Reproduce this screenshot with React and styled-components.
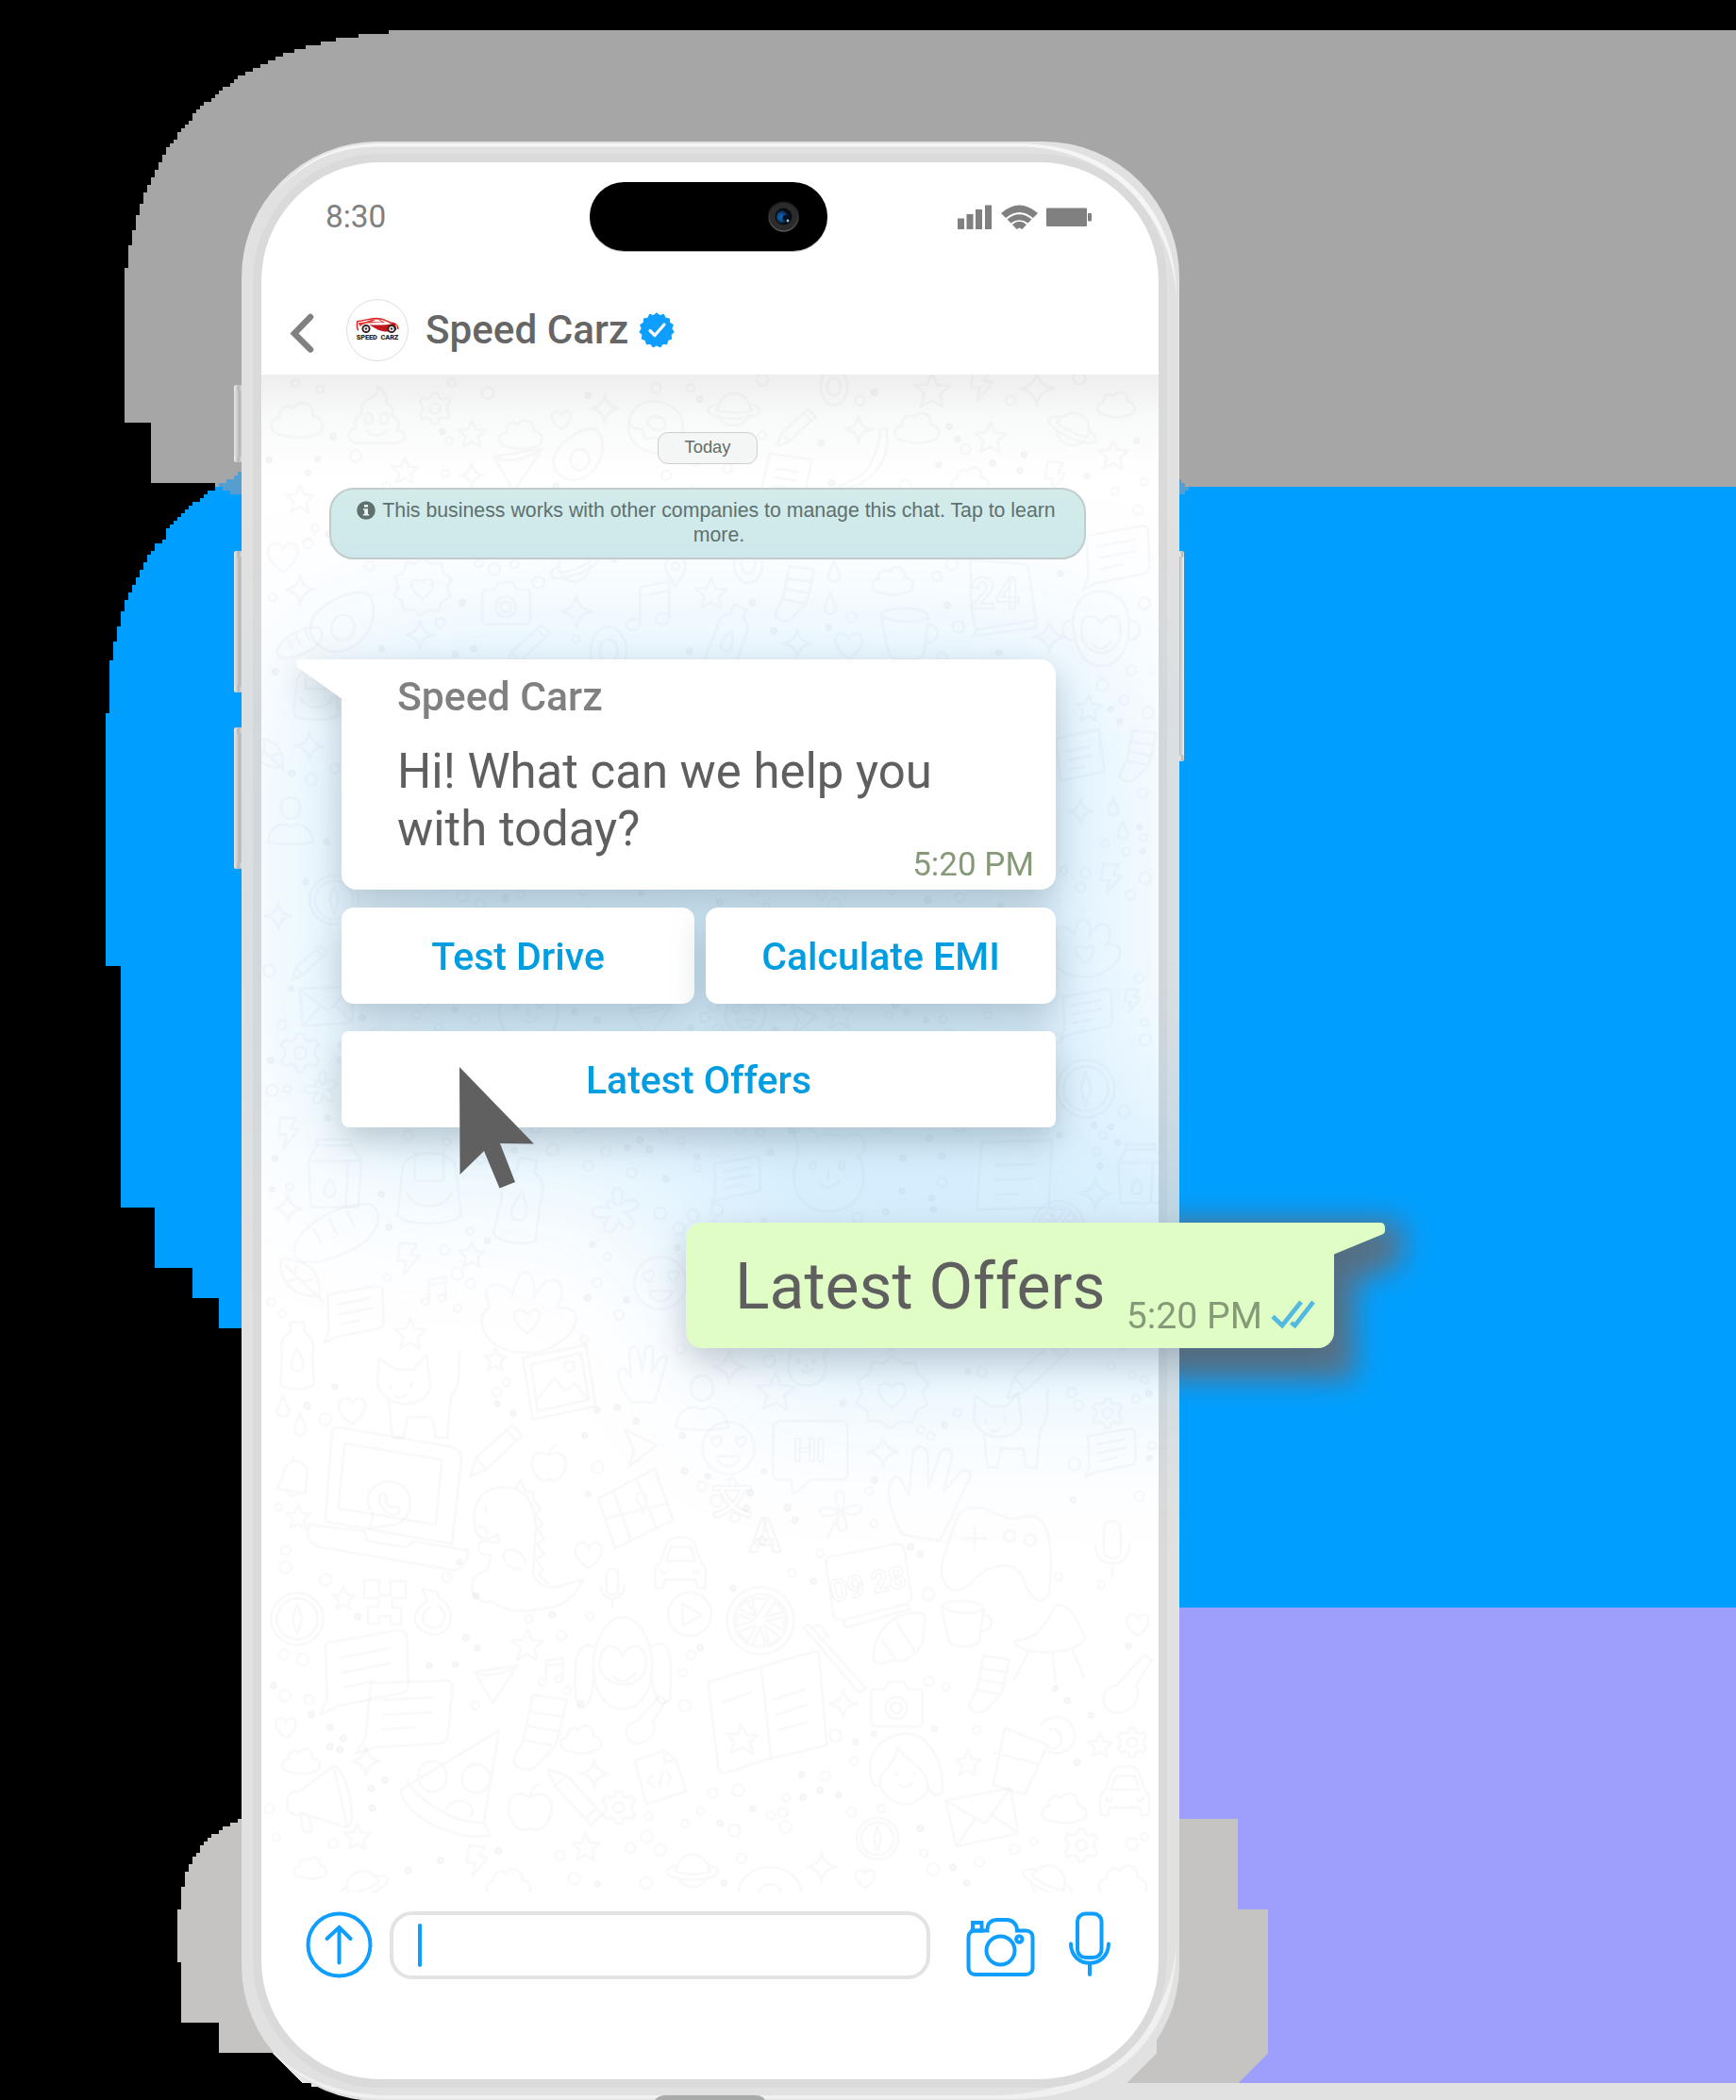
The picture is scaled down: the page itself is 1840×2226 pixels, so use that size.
import React from "react";
import styled, { createGlobalStyle } from "styled-components";

const GlobalStyle = createGlobalStyle`
  html, body { margin: 0; padding: 0; background: #000; }
  * { box-sizing: border-box; }
`;

const Page = styled.main`
  position: relative;
  width: 1840px;
  height: 2226px;
  overflow: hidden;
  background: #000;
  font-family: Roboto, "Liberation Sans", sans-serif;
  padding: 150px 0 0 256px;
`;

const Backdrop = styled.svg`
  position: absolute;
  inset: 0;
`;

const Phone = styled.section`
  position: relative;
  width: 994px;
  height: 2077px;
  padding: 22px 22px 23px 21px;
  border-radius: 144px;
  background: #e1e1e1;
`;

const Overlay = styled.svg`
  position: absolute;
  left: 0;
  top: 0;
  pointer-events: none;
`;

const Pointer = styled(Overlay)`
  left: 124px;
  top: 36px;
`;

/* Covers the whole handset, measured from the chat panel's corner */
const GlowLayer = styled.div`
  position: absolute;
  left: -21px;
  top: -247px;
  width: 994px;
  height: 2076px;
  pointer-events: none;
`;

const SideButton = styled.i`
  position: absolute;
  left: ${(p) => (p.$right ? "994px" : "-8px")};
  top: ${(p) => p.$top}px;
  width: ${(p) => (p.$right ? 5 : 8)}px;
  height: ${(p) => p.$height}px;
  border-radius: ${(p) => (p.$right ? "0 3px 3px 0" : "3px 0 0 3px")};
  background: ${(p) =>
    p.$right
      ? "linear-gradient(90deg, #b5b8ba, #d9dcde 60%, #eef1f3)"
      : "linear-gradient(90deg, #e6e7e7 0, #d2d3d4 35%, #b2b4b6 75%, #c8c9ca)"};
  &::before, &::after {
    content: "";
    position: absolute;
    left: 0;
    width: 100%;
    height: 7px;
    border-radius: 3px;
    background: linear-gradient(90deg, #f2f2f2, #b4b4b4 60%, #dcdcdc);
  }
  &::before { top: 0; }
  &::after { bottom: 0; }
`;

const Screen = styled.div`
  position: relative;
  display: flex;
  flex-direction: column;
  height: 2032px;
  border-radius: 126px;
  background: #fff;
  box-shadow: 0 0 0 9px #dadada;
`;

const StatusBar = styled.header`
  position: relative;
  display: grid;
  grid-template-columns: 1fr 252px 1fr;
  align-items: center;
  height: 116px;
  padding: 0 70px 0 68px;
`;

const Clock = styled.span`
  font-size: 33.4px;
  line-height: 38px;
  color: #808080;
`;

const Island = styled.div`
  display: flex;
  align-items: center;
  justify-content: flex-end;
  height: 73px;
  margin: 0 1px 2px -1px;
  padding-right: 30px;
  border-radius: 37px;
  background: #000;
  box-shadow: 0 1px 0 #a8a8a8;
`;

const StatusIcons = styled.div`
  display: flex;
  justify-content: flex-end;
`;

const ChatHeader = styled.div`
  position: relative;
  display: flex;
  align-items: center;
  height: 109px;
  padding: 14px 0 0 30px;
`;

const BackIcon = styled.svg`
  margin-top: 7px;
`;

const Avatar = styled.div`
  display: flex;
  flex-direction: column;
  align-items: center;
  width: 66px;
  height: 66px;
  margin-left: 34px;
  padding-top: 18px;
  border: 1px solid #dedede;
  border-radius: 50%;
`;

const LogoText = styled.span`
  font: 900 7.4px/8px Roboto, sans-serif;
  letter-spacing: -0.1px;
  word-spacing: 2px;
  color: #282828;
  white-space: nowrap;
`;

const ContactName = styled.h1`
  margin: 0 11px 0 18px;
  font-weight: 500;
  font-size: 42.2px;
  line-height: 50px;
  color: #666;
`;

const Chat = styled.div`
  position: relative;
  display: flex;
  flex-direction: column;
  height: 1609px;
  padding-top: 61px;
  background: linear-gradient(#eeeeee, rgba(248, 249, 249, 0.9) 46px, rgba(255, 255, 255, 0) 110px);
`;

const DateChip = styled.span`
  position: relative;
  align-self: center;
  width: 106px;
  height: 34px;
  margin-right: 5px;
  border: 1.5px solid #cdcfcf;
  border-radius: 11px;
  background: #f4f6f6;
  font: 18.4px/30px "Liberation Sans", Arial, sans-serif;
  text-align: center;
  color: #60706c;
`;

const Notice = styled.p`
  position: relative;
  align-self: center;
  width: 802px;
  height: 76px;
  margin: 25px 5px 0 0;
  padding: 9px 0 0 24px;
  border: 2px solid #c2cccc;
  border-radius: 26px;
  background: linear-gradient(#d2ecea, #cfe8eb);
  font: 21.3px/26px "Liberation Sans", Arial, sans-serif;
  text-align: center;
  white-space: pre;
  color: #5f706f;
  svg { margin: 0 7px 0 -27px; vertical-align: -3px; }
`;

const cardShadow = "drop-shadow(0 14px 18px rgba(60, 80, 88, 0.28))";

const Incoming = styled.article`
  position: relative;
  display: flex;
  flex-direction: column;
  width: 757px;
  height: 244px;
  margin: 106px 0 0 85px;
  padding: 14px 23px 0 59px;
  border-radius: 0 16px 16px 16px;
  background: #fff;
  filter: ${cardShadow};
`;

const Tail = styled.svg`
  position: absolute;
  top: 0;
  left: ${(p) => p.$left}px;
`;

const Sender = styled.h2`
  margin: 0;
  font-weight: 500;
  font-size: 42.7px;
  line-height: 50px;
  color: #808080;
`;

const Body = styled.p`
  margin: 25px 0 0;
  font-size: 50.9px;
  line-height: 60.5px;
  white-space: pre-line;
  color: #5f5f5f;
`;

const Time = styled.time`
  align-self: flex-end;
  margin-top: ${(p) => p.$lift || 0}px;
  font-size: ${(p) => p.$size}px;
  line-height: 40px;
  color: #879a78;
  white-space: nowrap;
`;

const Replies = styled.div`
  position: relative;
  display: grid;
  grid-template-columns: 374px 371px;
  column-gap: 12px;
  margin: ${(p) => p.$top}px 0 0 85px;
`;

const Reply = styled.button`
  grid-column: ${(p) => (p.$wide ? "1 / 3" : "auto")};
  height: 102px;
  padding: 0;
  border: 0;
  border-radius: ${(p) => (p.$wide ? 8 : 13)}px;
  background: #fff;
  font: 500 41px/104px Roboto, sans-serif;
  color: #009de0;
  filter: ${cardShadow};
`;

const Outgoing = styled.article`
  position: relative;
  align-self: flex-end;
  display: flex;
  align-items: flex-start;
  width: 687px;
  height: 133px;
  margin: 101px -186px 0 0;
  padding: 28px 20px 0 52px;
  border-radius: 17px 0 17px 17px;
  background: #e0fdc5;
  filter: drop-shadow(0 14px 18px rgba(60, 76, 90, 0.28));
`;

const OutgoingText = styled.p`
  margin: 0;
  font-size: 67.8px;
  line-height: 80px;
  color: #5f5f5f;
  white-space: nowrap;
`;

const Meta = styled.div`
  display: flex;
  align-items: flex-start;
  margin: 51px 0 0 auto;
  gap: 9px;
`;

const Ticks = styled.svg`
  margin-top: 2px;
`;

const InputBar = styled.footer`
  position: relative;
  display: flex;
  align-items: flex-start;
  padding: 20px 0 0 47px;
`;

const Field = styled.div`
  width: 573px;
  height: 72px;
  margin-left: 18px;
  padding: 9px 0 0 26px;
  border: 4px solid #e3e3e3;
  border-radius: 24px;
`;

const Caret = styled.div`
  width: 4px;
  height: 46px;
  border-radius: 2px;
  background: #0d9eff;
`;

const ActionIcon = styled.svg`
  margin-left: ${(p) => p.$gap}px;
  fill: none;
  stroke: #0d9eff;
  stroke-width: 4;
  stroke-linecap: round;
`;

/* Line drawings of the chat wallpaper, each in a -50..50 box */
const DOODLES = {
  cloud: "M-28 24C-52 24-54-6-32-8C-34-26-16-34-6-24C4-44 34-32 28-10C50-10 54 20 32 24C12 32-10 30-28 24Z",
  star: "M0-46L13-15L46-12L21 10L28 44L0 26L-30 42L-20 9L-46-14L-13-16Z",
  sparkle: "M0-50Q6-6 50 0Q6 6 0 50Q-6 6-50 0Q-6-6 0-50Z",
  heart: "M0 42C-60 4-46-38-20-38C-6-38 0-24 0-20C4-30 16-42 30-36C58-20 32 22 0 42Z",
  planet: "M-30 6A30 32 0 1 1 30 6M-28 14A30 30 0 0 0 28 14M-32-6C-64 4-44 20 0 20S62 4 32-6M-32 2C-34 12 34 12 32 2",
  gear: "M-8-48H8L12-34L24-28L38-34L48-20L38-8V8L48 20L38 34L24 28L12 34L8 48H-8L-12 34L-24 28L-38 34L-48 20L-38 8V-8L-48-20L-38-34L-24-28L-12-34ZM16 0A16 16 0 1 1-16 0A16 16 0 1 1 16 0",
  bolt: "M-22-46L26-42L8-12L34-8L-12 48L-4 8L-30 6Z",
  rings: "M34 0A34 46 0 1 1-34 0A34 46 0 1 1 34 0M17 0A17 22 0 1 1-17 0A17 22 0 1 1 17 0",
  donut: "M48 0C48 36 26 46 0 46S-48 30-48 0S-24-44 0-44S48-30 48 0ZM-46 6C-34 22-26 2-16 20C-6 34 2 10 12 22C22 34 34 6 46 12M16-6A16 12 0 1 1-16-6A16 12 0 1 1 16-6",
  poo: "M-10-28C0-34 4-40 2-50C16-40 20-30 16-20C30-18 30-4 24 0C42 6 40 20 34 24C56 32 48 48 30 48H-34C-54 44-50 24-34 22C-40 10-34 0-24-2C-30-14-22-24-10-28ZM-6 6A7 9 0 1 1-20 6A7 9 0 1 1-6 6M20 6A7 9 0 1 1 6 6A7 9 0 1 1 20 6M-16 28Q0 42 16 28",
  banana: "M34-50C44 0 10 46-46 48C-40 36-6 36 8 8C18-12 24-30 24-48Z",
  cone: "M-46-20L46-34L-8 46ZM-46-20C-30-6 20-14 46-34",
  card: "M-40-30L36-46L46 28L-32 44ZM-20-8L20-16M-18 8L22 0M-14 24L10 19",
  doc: "M-42-30L38-44C44-44 46-40 46-36L48 14C48 20 46 22 42 24L-28 38L-48 48L-40 30ZM-26-14L26-24M-24 2L28-8M-22 18L10 11",
  camera: "M-46-20C-46-26-42-28-38-28H-22L-14-42H14L22-28H40C46-28 48-24 48-20V30C48 36 44 40 38 40H-38C-44 40-46 36-46 30ZM20 6A20 20 0 1 1-20 6A20 20 0 1 1 20 6M10 6A10 10 0 1 1-10 6A10 10 0 1 1 10 6",
  drop: "M0-46C-4-20-24 0-24 20C-22 48 22 48 24 20C24 0 4-20 0-46Z",
  pin: "M0 48C-10 20-32 4-30-18C-26-54 26-54 30-18C32 4 10 20 0 48ZM11-16A11 11 0 1 1-11-16A11 11 0 1 1 11-16",
  music: "M-18 30V-36L34-46V20M-18-20L34-30M-18 30A12 10 0 1 1-42 30A12 10 0 1 1-18 30M34 20A12 10 0 1 1 10 20A12 10 0 1 1 34 20",
  sock: "M-4-48L40-42L28 10C24 24 12 30 0 44C-10 54-34 46-28 32L-16 10ZM-8-26L36-20M-12-8L32 0M-16 10L26 18",
  cup: "M-44-30C-30-44 24-44 34-26L26 34C20 46-22 48-30 34ZM-44-30C-30-16 22-14 34-26M34-14C56-12 52 16 28 16",
  calendar: "M-38-46L32-40C38-40 42 20 46 30L-30 42C-42 10-34-30-38-46ZM-30 42L-34 50L44 40L46 30",
  person: "M20-26A20 22 0 1 1-20-26A20 22 0 1 1 20-26M-46 44C-44 10-18 2 0 12C14 2 44 10 46 44Q0 52-46 44Z",
  monkey: "M34-6C36-34 18-48-2-48S-38-30-34 0S-16 46 4 44S36 16 34-6ZM-34-12C-56-12-48 16-32 12M34-12C54-14 50 14 34 12M-24-4C-22-24-6-18 0-8C4-18 22-24 24-4C26 14 14 28 0 28S-26 14-24-4M-12 16Q0 30 12 14",
  clock: "M46 0A46 46 0 1 1-46 0A46 46 0 1 1 46 0M36 0A36 36 0 1 1-36 0A36 36 0 1 1 36 0M-8 0L0-28L8 0L0 28Z",
  envelope: "M-46-30L46-34L48 30L-40 36ZM-46-30L4 10L46-34M-40 36L-10 2M48 30L16 0",
  flower: "M0-10C-22-50 26-50 6-10C36-36 54 0 12 2C50 20 16 48 4 12C0 52-40 34-8 8C-50 22-52-20-10-4C-22-14-14-28 0-10Z",
  carton: "M-36-20L-24-42H24L38-22L34 44H-32ZM-36-20H20L38-22M20-20L16 44M-24-42V-50H22L24-42M-6 6C-20 22-12 30-6 30S8 20-6 6",
  bread: "M-48 26C-52 0 0-34 38-30C58-20 42 14 10 24C-10 34-40 42-48 26ZM-26-2L-18 12M-8-14L0 4M12-22L20-4",
  leaf: "M-44-44C10-46 42-20 36 34C-10 36-50 10-44-44ZM-34-30L46 46M-14-12L-12-30M2 4L24-2M-6-4L-28 2",
  bag: "M-34-20C-34-50 34-50 34-20L40 36C30 50-30 50-40 36ZM-18-44V-8H18V-44M-28 8C-20 30 20 30 28 8",
  bottle: "M-10-48H10V-34C24-26 24-14 22 0L24 42C10 50-14 50-24 42L-22 0C-24-14-24-26-10-34ZM0-10C-14 14-8 22 0 22S14 14 0-10",
  bear: "M-34-30C-46-50-14-52-12-36C-2-42 12-40 18-34C32-50 50-28 34-16C48 20 30 46 0 46S-46 20-34-14ZM-16-8A3 4 0 1 1-18-8M16-8A3 4 0 1 1 14-8M-10 14Q0 26 12 12M0 2V12",
  hands: "M-6 44C-40 44-54 10-36 0C-48-20-28-30-14-12C-10-40 10-40 6-8C20-40 44-24 28 2C54-4 52 24 28 36C18 44 6 46-6 44ZM0 26C-24 8-8-4 0 8C8-4 22 8 0 26",
  picture: "M-42-30L34-46L46 28L-30 44ZM-32-22L28-36L38 20L-24 34ZM-26 22L-4-6L10 10L20 0L36 18M20-20A6 6 0 1 1 8-20A6 6 0 1 1 20-20",
  hand: "M-20 46C-40 20-46 0-38-10C-30-14-26 0-20 6L-24-38C-20-50-10-46-8-36L-2-6L4-44C10-52 18-46 16-36L14-4L28-28C38-34 40-24 36-16C28 10 26 26 18 46Z",
  cat: "M-40-40L-22-28H-4L10-44L14-12C12 4 0 8-14 8S-42-4-42-16ZM-30 4L-26 44H-14L-10 22H16L20 44H32L36 0C52-20 40-40 46-48M-28-12V-8M-6-14V-10M-22 0Q-16 4-12-2",
  laptop: "M-30-46L40-34C44-32 46-30 46-26L40 26L-38 12L-34-40C-34-44-34-46-30-46ZM-26-36L34-26L30 14L-30 4ZM-48 14L-14 18L-12 24L12 28L16 24L50 30C50 38 46 42 40 42L-40 28C-48 26-50 22-48 14Z",
  phone: "M0-46C60-44 56 46 0 44L-40 50L-32 22C-58-14-30-46 0-46ZM-18-20C-26 6 2 30 22 20V8L10 6L2 8L-6-4L-4-12L-10-22Z",
  bell: "M-40 26L-24-8C-24-34 4-46 20-30C38-20 24 4 26 38ZM-4-38V-48M-14 32C-14 46 4 46 8 36",
  pencil: "M-46 46L-36 14L28-44L46-26L-18 34ZM-36 14L-18 34M18-34L36-16",
  apple: "M0-20C-34-40-50-10-40 16C-30 50-8 46 0 40C10 50 34 40 40 14C48-14 30-38 0-20ZM0-20C0-34 8-44 18-46",
  triangle: "M-34-46L46-8L-24 46L-12 4Z",
  smile: "M46 0A46 46 0 1 1-46 0A46 46 0 1 1 46 0M-24-18C-10-30-8-10-20-2C-34-10-32-22-24-18M20-18C34-28 34-10 22-2C10-10 12-24 20-18M-20 14H20C18 38-18 38-20 14Z",
  bubble: "M-36-46H40C46-46 48-42 48-38V20C48 26 46 28 40 28H2L-20 46L-24 28H-38C-44 28-46 26-46 20V-38C-46-42-42-46-36-46Z",
  gamepad: "M-34-30C-10-46 0-20 20-26C46-34 50-6 46 40C40 54 28 46 22 26C14 10-8 16-20 28C-36 48-54 36-48 10ZM-30-8H-10M-20-18V2M16-10A5 5 0 1 1 6-10A5 5 0 1 1 16-10M34-6A5 5 0 1 1 24-6A5 5 0 1 1 34-6",
  mic: "M-14-32C-14-50 14-50 14-32V4C14 22-14 22-14 4ZM-28-4C-28 36 28 36 28-4M0 26V48",
  dino: "M-42-10C-48-34-36-46-20-46C-2-46 4-34 6-16L4 24C8 34 16 36 24 34L44 28C38 42 28 52 8 52C-8 56-22 52-28 46C-40 48-48 40-44 28C-42 22-34 24-32 18L-30 8C-38 10-44 2-38-2C-32-4-28 0-24-2V-8C-30-4-38-2-42-10ZM-34-30V-26M-40-14C-34-16-32-10-34-4M-6 20C-20 20-24 6-16 4C-8 4-4 8-2 14M-10-46L-6-52L-2-42L4-42V-36L10-28L6-24L12-16L7-12L13-4L7 0L13 8L6 12L12 20L8 24L16 32",
  map: "M-44-12L24-48L46 14L-24 48ZM-26-20L-4 40M2-36L26 24M8-2C-10-20 18-26 14-8L10 6ZM-36 12L40-6",
  clover: "M0 0C-30-50 26-50 0 0C50-34 50 24 0 0C34 48-24 48 0 0C-46 30-54-26 0 0L-24 48",
  car: "M-34 0L-22-34C-14-46 18-46 24-34L36 0C46 8 44 20 42 44H30L26 30H-26L-30 44H-42C-44 20-46 6-34 0ZM-24-2L-16-26H18L26-2ZM-22 14A5 5 0 1 1-32 14M32 14A5 5 0 1 1 22 14",
  digital: "M-46-20C-48-26-46-28-42-30L30-44C36-44 40-42 40-38L48 14C48 18 46 20 42 22L-28 40C-34 40-36 38-38 34ZM-28 40L-24 48L46 28L42 22",
  orange: "M48 0A48 48 0 1 1-48 0A48 48 0 1 1 48 0M38 0A38 38 0 1 1-38 0A38 38 0 1 1 38 0M-6-6L-12-32H12ZM6-6L22-28L32-12ZM8 0L34-6V14ZM6 6L28 24L12 34ZM0 8L8 36H-12ZM-6 6L-18 30L-32 16ZM-8 0L-34 8V-10ZM-6-5L-32-18L-20-30Z",
  play: "M46 0A46 46 0 1 1-46 0A46 46 0 1 1 46 0M-16-22L26 2L-14 24Z",
  creeper: "M-44-46H-12V-14H12V-44H44V-8H16V12H34V48H12V30H-12V46H-36V10H-14V-8H-44Z",
  ring: "M-12-20L-22-46L8-40L12-26C46-14 44 42 6 48C-44 46-50 0-12-20ZM-6-8C-34 10-20 34 4 34C28 30 30-4 10-10",
  croissant: "M-44 34C-46-20 0-50 34-44C50-36 36-26 40-10C38 20 10 40-10 34C-24 34-30 48-44 34ZM-30 0L-8 32M-6-28L26 22",
  toothbrush: "M-44-46L-36-50L46 42L36 48ZM-32-44L-22-50L-8-34L-20-28",
  grill: "M-44 0C-20-4-10-8 8-46C30-50 36-20 46-6C40 18-36 20-44 0ZM-26 12L-44 48M4 14L8 50M28 8L44 44",
  girl: "M30 4C30 34 14 48 0 48S-30 34-30 4S-14-46 0-46S30-26 30 4ZM-30-16C-52-26-50 20-46 46C-32 50-32 30-30 20M30-16C52-30 50 10 48 38C36 50 32 30 30 20M-24 0C-20-24-4-18 0-6C6-22 24-20 24 2C22 30-22 30-24 0M-10 14Q0 26 12 12",
  book: "M-46-24L-4-36L38-48C42-48 42-46 42-44L48 26L-2 38L-32 48C-36 48-38 46-38 42ZM-4-36L4 36M-34-8L-12-16M6-10L30-18M8 2L32-6M10 14L32 8M-20 10L-15 18L-6 18L-13 24L-10 33L-19 28L-28 32L-25 23L-32 17L-22 17Z",
  guitar: "M30-48L42-40L16 2C30 22 4 50-20 44C-44 34-40 6-14 0Z",
  pizza: "M44-48L-46 6C-44 30 4 54 36 48L30 36L44-48ZM-40-2C-26 20 8 38 30 36M-4-6A13 14 0 1 1-30-6A13 14 0 1 1-4-6M36-4A13 13 0 1 1 10-4A13 13 0 1 1 36-4M-4 24C4 8 26 20 18 30",
  megaphone: "M-44 12C-46-10-34-12-28-10L20-46L40 40L-24 20C-32 26-42 20-44 12ZM20-46C40-44 54 34 40 40M-26 20L-22 46L-10 46L-14 24",
  file: "M-44-28L6-46L26-30L44 24L-24 46ZM6-46L8-26L26-30M-14-4L-22 8L-10 16M10-10L18 0L12 12M4-10L-2 16",
  boy: "M-46 10C-54-30-20-50 4-48S52-14 48 30C40 38 34 30 30 24C20 50-20 56-34 20C-40 24-44 20-46 10ZM-34 20C-36 0-18 2-10-30C0-8 26-10 30 24M-12 4V8M12 4V8M-8 20Q0 26 8 18",
  drink: "M-24-32L28-12L0 48L-38 36ZM-36-2L14 10M-24-32L28-12M20-36A22 22 0 1 1 28-4M30-30A10 12 0 1 1 26-12",
  avocado: "M20-48C46-30 44 20 10 40C-20 56-50 30-40 4C-32-20-2-50 20-48ZM18 8A16 18 0 1 1-14 8A16 18 0 1 1 18 8",
  badge: "M0-48L14-38L30-40L34-24L48-12L40 0L46 16L32 24L26 40L10 38L-4 48L-16 38L-32 38L-34 24L-48 14L-40 0L-46-16L-32-24L-26-40L-12-38ZM0 20C-30 0-18-20 0-8C14-22 30 0 0 20Z",
};

/* name, x, y, size, rotation */
const PLACED = [
  ["cloud", 315, 447, 58], ["poo", 399, 440, 62], ["gear", 461, 433, 34], ["star", 500, 460, 32], ["heart", 595, 445, 24], ["cloud", 552, 462, 48],
  ["planet", 778, 432, 58], ["donut", 695, 452, 60, 15], ["rings", 884, 410, 42], ["star", 988, 414, 40], ["bolt", 1040, 408, 36], ["sparkle", 1099, 412, 36],
  ["cloud", 1183, 430, 42], ["cloud", 972, 455, 50], ["planet", 1138, 453, 58, 25], ["sparkle", 910, 455, 28], ["star", 1050, 464, 36], ["star", 1180, 482, 34],
  ["avocado", 614, 482, 62, 10], ["banana", 917, 487, 66], ["card", 832, 505, 58, 20], ["cone", 549, 495, 56], ["star", 429, 499, 30], ["star", 318, 529, 32],
  ["sparkle", 500, 504, 26], ["sparkle", 318, 625, 32], ["pencil", 844, 453, 44], ["sparkle", 641, 433, 30], ["bolt", 1118, 505, 34], ["cloud", 1028, 510, 42],
  ["doc", 1183, 590, 74], ["calendar", 1060, 632, 84], ["monkey", 1167, 668, 86], ["badge", 448, 622, 64], ["camera", 536, 640, 54], ["planet", 608, 598, 56, -20],
  ["pin", 716, 606, 36], ["music", 689, 644, 60], ["star", 754, 629, 36], ["sock", 839, 629, 60], ["drop", 884, 606, 26], ["drop", 880, 640, 26], ["cloud", 946, 617, 46],
  ["cup", 962, 671, 66], ["avocado", 364, 659, 76, 20], ["bread", 318, 680, 50], ["sparkle", 611, 648, 34], ["sparkle", 445, 673, 30], ["sparkle", 845, 682, 30], ["sparkle", 1112, 675, 34],
  ["bottle", 773, 675, 70, 20], ["heart", 900, 684, 34], ["rings", 645, 690, 56], ["pencil", 560, 684, 50], ["rings", 793, 598, 44], ["heart", 300, 590, 38],
  ["person", 308, 870, 52], ["sparkle", 328, 791, 30], ["clock", 354, 954, 56], ["sparkle", 295, 971, 28], ["bag", 335, 735, 60], ["leaf", 285, 800, 40],
  ["star", 1154, 751, 30], ["sock", 1203, 801, 56], ["card", 1143, 801, 60], ["bolt", 1177, 931, 34], ["drop", 1180, 855, 22], ["drop", 1190, 880, 22], ["sparkle", 1145, 860, 26],
  ["envelope", 345, 1066, 60], ["pencil", 328, 1020, 40], ["gear", 318, 1116, 42], ["flower", 341, 1154, 44], ["bolt", 305, 1200, 34], ["carton", 354, 1246, 76],
  ["sparkle", 305, 1281, 30], ["bread", 357, 1305, 94], ["doc", 1151, 1074, 58], ["clock", 1151, 1154, 66], ["bolt", 1200, 1060, 26], ["hands", 1150, 1000, 80],
  ["bear", 560, 1068, 80], ["cone", 690, 1080, 50], ["smile", 790, 1075, 46], ["star", 890, 1075, 34], ["triangle", 850, 1080, 34],
  ["leaf", 320, 1357, 50], ["bolt", 432, 1334, 36], ["star", 500, 1330, 30], ["bag", 455, 1258, 84], ["bottle", 552, 1273, 94, 10], ["flower", 653, 1284, 62],
  ["doc", 780, 1250, 54], ["bear", 878, 1240, 96], ["card", 1073, 1246, 96, 10], ["sparkle", 1161, 1265, 34], ["carton", 1209, 1246, 66], ["orange", 1122, 1300, 56],
  ["doc", 375, 1392, 66], ["hands", 559, 1385, 110], ["star", 435, 1414, 36], ["music", 461, 1369, 34], ["bottle", 315, 1437, 74], ["cat", 442, 1480, 100],
  ["star", 525, 1441, 26], ["picture", 591, 1466, 88], ["hand", 682, 1457, 64], ["star", 822, 1475, 44], ["person", 744, 1487, 60], ["badge", 946, 1476, 80],
  ["cat", 1070, 1516, 90], ["heart", 373, 1495, 34], ["drop", 300, 1491, 26], ["drop", 318, 1510, 26], ["gear", 1174, 1498, 32], ["sparkle", 773, 1449, 34],
  ["bear", 855, 1445, 52], ["pencil", 1100, 1450, 70], ["smile", 700, 1360, 60],
  ["laptop", 410, 1592, 172], ["phone", 412, 1594, 52], ["bell", 312, 1566, 46], ["star", 316, 1608, 28], ["pencil", 526, 1537, 60], ["apple", 582, 1551, 42],
  ["triangle", 677, 1535, 42], ["smile", 772, 1535, 60], ["bubble", 858, 1545, 84], ["sparkle", 936, 1539, 32], ["hand", 985, 1583, 104, 10], ["doc", 1177, 1539, 56],
  ["gamepad", 1057, 1640, 120], ["mic", 1179, 1641, 64], ["dino", 560, 1637, 132], ["heart", 624, 1648, 34], ["map", 673, 1599, 88], ["clover", 891, 1602, 58],
  ["car", 721, 1656, 62], ["digital", 920, 1679, 96], ["mic", 649, 1683, 44], ["clock", 315, 1716, 60], ["star", 364, 1694, 26], ["creeper", 408, 1698, 50],
  ["ring", 459, 1708, 52], ["play", 731, 1711, 50], ["orange", 806, 1718, 74], ["toothbrush", 884, 1759, 74], ["croissant", 954, 1738, 64], ["cup", 1023, 1720, 58],
  ["grill", 1112, 1740, 84], ["heart", 1206, 1722, 28], ["doc", 386, 1771, 98], ["doc", 430, 1819, 98, 8], ["star", 559, 1744, 36], ["girl", 660, 1762, 104],
  ["book", 812, 1815, 134], ["camera", 950, 1807, 58], ["sock", 1045, 1785, 62], ["guitar", 1193, 1786, 66], ["cone", 526, 1782, 50], ["music", 585, 1773, 34],
  ["sock", 568, 1836, 82], ["cloud", 616, 1845, 46], ["cloud", 319, 1868, 42], ["sparkle", 388, 1867, 30], ["pizza", 478, 1890, 116], ["megaphone", 338, 1907, 76],
  ["file", 700, 1884, 62], ["boy", 960, 1876, 80], ["drink", 1086, 1860, 88], ["star", 1026, 1869, 30], ["star", 1166, 1850, 28], ["car", 1192, 1898, 60],
  ["envelope", 1040, 1926, 76, -8], ["clock", 930, 1949, 48], ["gear", 656, 1916, 36], ["pencil", 610, 1905, 64, 90], ["cloud", 1128, 1918, 50], ["gear", 1200, 1847, 32],
  ["gear", 1146, 1956, 36], ["star", 379, 1947, 30], ["star", 621, 1958, 32], ["bolt", 505, 1972, 34], ["planet", 734, 1981, 58], ["sparkle", 871, 1979, 32],
  ["planet", 1112, 1993, 60, 25], ["cloud", 1190, 1996, 54], ["cloud", 539, 1998, 50], ["planet", 384, 1998, 58, -20], ["cloud", 329, 1981, 36], ["donut", 816, 2010, 70],
  ["sparkle", 630, 1880, 30], ["sparkle", 894, 1806, 30], ["heart", 303, 1831, 26], ["heart", 917, 1991, 24], ["apple", 562, 1916, 54], ["guitar", 683, 1824, 54],
];

const scatter = () => {
  let seed = 41;
  const next = () => (seed = (seed * 16807) % 2147483647) / 2147483647;
  const marks = PLACED.map(([, x, y, s]) => ({ x, y, r: s * 0.5 }));
  const dots = [];
  for (let i = 0; i < 9000 && dots.length < 780; i++) {
    const dot = { x: 285 + next() * 936, y: 400 + next() * 1600, r: [2.8, 3.2, 4, 5, 6.2][Math.floor(next() * 5)] };
    if (marks.every((m) => Math.hypot(m.x - dot.x, m.y - dot.y) > m.r + dot.r + 4)) {
      dots.push(dot);
      marks.push(dot);
    }
  }
  return dots;
};
const DOTS = scatter();

const Wallpaper = () => (
  <Overlay width="951" height="1609" viewBox="277 397 951 1609" fill="none" stroke="rgba(40,50,60,0.028)">
    {PLACED.map(([name, x, y, size, turn = 0], i) => (
      <path key={i} d={DOODLES[name]} transform={`translate(${x} ${y}) rotate(${turn}) scale(${size / 100})`} strokeWidth={280 / size} strokeLinejoin="round" strokeLinecap="round" />
    ))}
    {DOTS.map((d, i) => (
      <circle key={i} cx={d.x} cy={d.y} r={d.r} strokeWidth="2.5" fill={d.r < 3.5 ? "rgba(40,50,60,0.028)" : "none"} />
    ))}
    <g fontFamily="Roboto, sans-serif" fontWeight="700" strokeWidth="2.4" stroke="rgba(40,50,60,0.04)" textAnchor="middle">
      <text x="1055" y="645" fontSize="46">24</text>
      <text x="858" y="1549" fontSize="34">HI</text>
      <text x="920" y="1690" fontSize="32" transform="rotate(-12 920 1680)">09 28</text>
      <text x="776" y="1605" fontSize="44" fontFamily="'Noto Sans CJK SC', sans-serif">文</text>
      <text x="811" y="1645" fontSize="50">A</text>
    </g>
  </Overlay>
);

const steps = (pairs) => pairs.map(([x, y], i) => (i ? `H${x}V${y}` : `M${x} ${y}`)).join("");

const GRAY = steps([
  [132, 512], [132, 284], [136, 260], [140, 244], [144, 228], [148, 216], [152, 204], [156, 196], [160, 188], [164, 180], [168, 172], [172, 164], [176, 156], [180, 152],
  [184, 148], [188, 140], [192, 136], [196, 132], [200, 128], [204, 120], [208, 116], [212, 112], [216, 108], [224, 104], [228, 100], [232, 96], [236, 92], [244, 88],
  [248, 84], [252, 80], [260, 76], [268, 72], [276, 68], [284, 64], [292, 60], [300, 56], [312, 52], [324, 48], [340, 44], [356, 40], [380, 36], [412, 32],
]);
const BLUE = steps([
  [112, 1024], [112, 756], [116, 700], [120, 680], [124, 664], [128, 648], [132, 636], [136, 628], [140, 620], [144, 612], [148, 604], [152, 596], [156, 588], [160, 584],
  [164, 576], [172, 572], [176, 560], [180, 556], [184, 552], [188, 548], [192, 544], [196, 540], [200, 536], [204, 532], [212, 528], [216, 524], [220, 520], [228, 516],
]);
const FOOT = steps([
  [188, 2080], [188, 2024], [192, 2000], [196, 1984], [200, 1976], [204, 1968], [208, 1964], [212, 1956], [216, 1952], [220, 1948], [224, 1944], [232, 1940], [236, 1936],
  [244, 1932], [252, 1928],
]);

const BackdropShapes = () => (
  <Backdrop width="1840" height="2226" viewBox="0 0 1840 2226" shapeRendering="crispEdges">
    <path fill="#a6a6a6" d={`${GRAY}H1840V516H228V512H160V448H132Z`} />
    <path fill="#009fff" d={`${BLUE}H1840V1704H700V1408H232V1376H204V1344H164V1280H128V1024Z`} />
    <path fill="#559fd0" d="M232 516V512H240V508H248V504H252V500H260V524H244V520H236V516ZM1248 508H1252V512H1256V516H1260V520H1256V524H1248Z" />
    <path fill="#9e9efc" d="M1100 1704H1840V2208H1100Z" />
    <path fill="#c6c4c2" d={`${FOOT}H420V2176H232V2144H192V2080ZM1100 1928H1312V2024H1344V2176L1312 2208H1100Z`} />
    <path fill="#e8e8e8" d="M288 2176H400V2212H330V2208H320Z" />
    <path fill="#e1e1e1" d="M1000 2208H1194L1226 2176V2150H1000ZM900 2208H1840V2226H900Z" />
    <defs>
      <filter id="cast" filterUnits="userSpaceOnUse" x="900" y="1200" width="700" height="340">
        <feGaussianBlur stdDeviation="15" />
      </filter>
    </defs>
    <path filter="url(#cast)" fill="#6e6a70" fillOpacity="0.8" shapeRendering="auto" d="M1000 1294H1486V1340L1436 1360V1462H1000Z" />
  </Backdrop>
);

const Glow = () => (
  <Overlay width="994" height="2076" viewBox="256 150 994 2076">
    <defs>
      <filter id="soft" filterUnits="userSpaceOnUse" x="-100" y="300" width="2100" height="1700">
        <feGaussianBlur stdDeviation="86" />
      </filter>
      <clipPath id="body"><rect x="256" y="150" width="994" height="2076" rx="144" /></clipPath>
    </defs>
    <g clipPath="url(#body)">
      <path filter="url(#soft)" fill="#0096f0" fillOpacity="0.165" d="M330 690H1180V1190H1460V1460H800L690 1230H340Z" />
    </g>
  </Overlay>
);

const Highlights = () => (
  <Overlay width="994" height="2076" viewBox="256 150 994 2076">
    <clipPath id="shell"><rect x="256" y="150" width="994" height="2077" rx="144" /></clipPath>
    <g clipPath="url(#shell)">
      <path fill="#f5f5f5" d="M294 201C322 171 352 153 400 152H1080C1170 152 1246 210 1247 314C1240 220 1170 155.500 1080 155.500H400C354 156 324 172 294 201Z" />
      <path fill="#f0f0f0" d="M290 2176C320 2204 360 2220 410 2221H1050C1170 2221 1240 2150 1246.500 2063C1247 2160 1180 2225 1070 2225H410C360 2225 316 2206 290 2176Z" />
      <path fill="#a9aaaa" d="M694 2226Q698 2221 706 2221H800Q808 2221 811 2226Z" />
    </g>
  </Overlay>
);

const burst = Array.from({ length: 30 }, (_, i) => {
  const r = i % 2 ? 16.4 : 18.8;
  const a = (i * Math.PI) / 15 - Math.PI / 2;
  return `${19 + r * Math.cos(a)},${19 + r * Math.sin(a)}`;
}).join(" ");

export default function App() {
  return (
    <>
      <GlobalStyle />
      <Page>
        <BackdropShapes />
        <Phone>
          <SideButton $top={258} $height={82} />
          <SideButton $top={434} $height={150} />
          <SideButton $top={621} $height={150} />
          <SideButton $right $top={434} $height={223} />
          <Highlights />
          <Screen>
            <StatusBar>
              <Clock>8:30</Clock>
              <Island>
                <svg width="33" height="33" viewBox="0 0 33 33">
                  <defs>
                    <linearGradient id="rim" x1="0" y1="0" x2="0" y2="1"><stop stopColor="#141414" /><stop offset="1" stopColor="#5a5a5a" /></linearGradient>
                    <radialGradient id="lens" cx=".35" cy=".5"><stop stopColor="#0f6cc2" /><stop offset=".6" stopColor="#0b447f" /><stop offset="1" stopColor="#050c14" /></radialGradient>
                  </defs>
                  <circle cx="16.500" cy="16.500" r="15.500" fill="#2b2b2b" stroke="url(#rim)" strokeWidth="1.500" />
                  <circle cx="16.500" cy="16.500" r="9" fill="#080b10" />
                  <circle cx="16.500" cy="17" r="7.500" fill="url(#lens)" />
                  <circle cx="18.500" cy="18" r="3" fill="#04101c" />
                  <circle cx="21" cy="21" r="1.400" fill="#9ec4e0" />
                </svg>
              </Island>
              <StatusIcons>
                <svg width="143" height="28" viewBox="1016 216 143 28" fill="#808080">
                  <path d="M1016 231.500h7V243h-7ZM1025.500 227h7V243h-7ZM1035 222h7V243h-7ZM1045 217.500h7V243h-7Z" />
                  <path d="M1062 226Q1081.500 209 1101 226L1096 231Q1081.500 219 1067 231Z" />
                  <path d="M1068.500 232.500Q1081.500 222 1094.500 232.500L1090.500 236.500Q1081.500 230 1072.500 236.500Z" />
                  <path d="M1074 238Q1081.500 231.500 1089 238L1084.500 243L1081.500 241.500L1078.500 243Z" />
                  <rect x="1110" y="220.500" width="43" height="19.500" rx="1" />
                  <rect x="1154" y="226" width="4" height="8.500" rx="1" />
                </svg>
              </StatusIcons>
            </StatusBar>
            <ChatHeader>
              <BackIcon width="26" height="44" viewBox="308 331 26 44">
                <path d="M330 336L313 353.500L330 370.500" fill="none" stroke="#808080" strokeWidth="6.500" strokeLinecap="round" />
              </BackIcon>
              <Avatar>
                <svg width="46" height="18" viewBox="0 0 46 18">
                  <path d="M3 14C1 13 1 6 2 4.500C9 4 14 1.500 22 1.500C30 1.500 33 4.500 37 6C42 6.500 45 8 45 13" fill="none" stroke="#d22" strokeWidth="1.400" />
                  <path d="M14 8C20 9 32 9 41 6.500C43 9 44 12 43 14L36 15.500C28 16 24 14 19 11C17 10 16 9 14 8Z" fill="#c4161c" />
                  <path d="M3 6C8 6 12 5 18 2.500H25L31 6H22L14 6.500C10 6.500 7 8 5 10C4 9 3 8 3 6Z" fill="#e23a3a" />
                  <path d="M17 5L21 3H24L28 5.500Z" fill="#fff" />
                  <path d="M42 7.500L44.500 9L42.500 10.500Z" fill="#ffb060" />
                  <circle cx="11" cy="12.500" r="3.600" fill="#fff" stroke="#3a2424" strokeWidth="2" />
                  <circle cx="38" cy="12.500" r="3.600" fill="#fff" stroke="#3a2424" strokeWidth="2" />
                  <circle cx="11" cy="12.500" r="1.200" fill="#333" />
                  <circle cx="38" cy="12.500" r="1.200" fill="#333" />
                </svg>
                <LogoText>SPEED CARZ</LogoText>
              </Avatar>
              <ContactName>Speed Carz</ContactName>
              <svg width="38" height="38" viewBox="0 0 38 38">
                <polygon points={burst} fill="#0d9eff" />
                <path d="M12 19.500L17 24.500L27 13" fill="none" stroke="#fff" strokeWidth="3.200" strokeLinecap="round" strokeLinejoin="round" />
              </svg>
            </ChatHeader>
            <Chat>
              <Wallpaper />
              <GlowLayer><Glow /></GlowLayer>
              <DateChip>Today</DateChip>
              <Notice>
                <svg width="20" height="20" viewBox="0 0 20 20">
                  <circle cx="10" cy="10" r="9.800" fill="#5f706f" />
                  <path d="M8 4H12V6.600H8ZM7 8.200H12V14H13.200V15.600H6.800V14H8.200V9.800H7Z" fill="#e4f5f4" />
                </svg>
                {"This business works with other companies to manage this chat. Tap to learn\nmore."}
              </Notice>
              <Incoming>
                <Tail $left={-48} width="51" height="44" viewBox="0 0 51 44">
                  <path d="M5 0H51V44L48 41.500L2 8.500C-1 5 0 0 5 0Z" fill="#fff" />
                </Tail>
                <Sender>Speed Carz</Sender>
                <Body>{"Hi! What can we help you\nwith today?"}</Body>
                <Time $size={35} $lift={-12}>5:20 PM</Time>
              </Incoming>
              <Replies $top={19}>
                <Reply>Test Drive</Reply>
                <Reply>Calculate EMI</Reply>
              </Replies>
              <Replies $top={29}>
                <Reply $wide>Latest Offers</Reply>
                <Pointer width="82" height="132" viewBox="486 1129 82 132">
                  <path fill="#606060" d="M487 1131L566 1212.500L530 1212L546 1253L529.500 1259.500L513 1220L487.500 1245Z" />
                </Pointer>
              </Replies>
              <Outgoing>
                <Tail $left={682} width="60" height="36" viewBox="0 0 60 36">
                  <path d="M0 0H54C58 0 59 3 59 6C59 10 59 11 56 12.500L5 33.500V36H0Z" fill="#e0fdc5" />
                </Tail>
                <OutgoingText>Latest Offers</OutgoingText>
                <Meta>
                  <Time $size={39.200}>5:20 PM</Time>
                  <Ticks width="47" height="32" viewBox="1348 1378 47 32">
                    <path d="M1350 1396.500L1360 1406L1380 1381M1369.500 1403L1373.500 1406L1393 1381" fill="none" stroke="#52b9e0" strokeWidth="4.600" />
                  </Ticks>
                </Meta>
              </Outgoing>
            </Chat>
            <InputBar>
              <ActionIcon $gap={0} width="71" height="71" viewBox="324.500 2025.500 71 71">
                <circle cx="360" cy="2061" r="33" />
                <path d="M360 2043V2080M347 2054.500L360 2042.500L372 2054.500" />
              </ActionIcon>
              <Field><Caret /></Field>
              <ActionIcon $gap={38} width="73" height="71" viewBox="1025 2025.500 73 71">
                <path d="M1031 2046H1047.500C1047 2037 1053 2034.500 1058 2034.500H1068C1074 2034.500 1079 2039 1079 2046H1088C1093 2046 1095.500 2049 1095.500 2053V2085C1095.500 2090 1092 2092.500 1088 2092.500H1035C1030 2092.500 1027.500 2089 1027.500 2085V2053C1027.500 2049 1030 2046 1035 2046" />
                <rect x="1032" y="2037.500" width="9.500" height="8.500" strokeLinejoin="miter" />
                <circle cx="1061.500" cy="2067" r="15" />
                <circle cx="1081.300" cy="2055" r="3.200" />
              </ActionIcon>
              <ActionIcon $gap={35} width="46" height="71" viewBox="1132.500 2025.500 46 71">
                <rect x="1142.500" y="2028" width="25.500" height="46.500" rx="8.500" />
                <path d="M1135.500 2060C1136 2087 1175 2087 1175.500 2060M1155.500 2081V2092.500" />
              </ActionIcon>
            </InputBar>
          </Screen>
        </Phone>
      </Page>
    </>
  );
}
